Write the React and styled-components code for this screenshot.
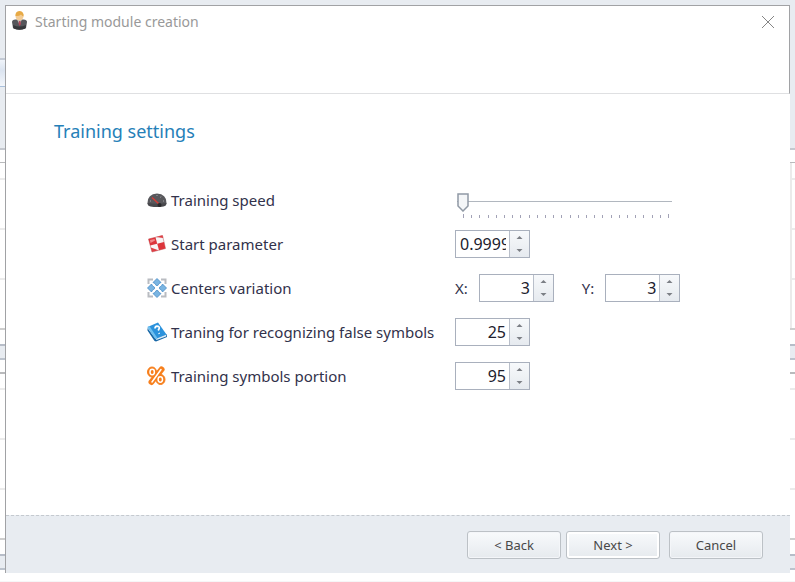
import React, { useState } from "react";
import styled, { createGlobalStyle } from "styled-components";

const Global = createGlobalStyle`
  * { box-sizing: border-box; }
  body { margin: 0; font-family: "Noto Sans", "Open Sans", sans-serif; color: #32324b; }
`;

const line = (y, color, size = 1) =>
  `linear-gradient(${color}, ${color}) 0 ${y}px / 100% ${size}px no-repeat`;

const Page = styled.main`
  min-height: 100vh;
  display: flex;
  flex-direction: column;
  padding: 5px 5px 9px;
  background:
    ${line(581, "#f6f6f7")},
    linear-gradient(#a9c0dc, #a9c0dc) 0 86px / 5px 1px no-repeat,
    linear-gradient(#f0f4fa, #dbe4f0 40%, #f3f6fb) 0 60px / 5px 26px no-repeat,
    linear-gradient(#c3cad5, #c3cad5) 0 58px / 5px 2px no-repeat,
    ${line(148, "#c4c8cf", 2)},
    ${line(0, "#e8ecf1", 148)},
    ${line(162, "#b9babc")},
    ${line(178, "#ebebeb", 2)},
    ${line(228, "#ebebeb", 2)},
    ${line(278, "#ebebeb", 2)},
    ${line(328, "#cecece", 2)},
    ${line(344, "#b7bdc8", 2)},
    ${line(358, "#bcc3cd", 2)},
    ${line(346, "#e8ecf1", 12)},
    ${line(372, "#b9babc", 2)},
    ${line(388, "#ebebeb", 2)},
    ${line(438, "#ebebeb", 2)},
    ${line(488, "#ebebeb", 2)},
    ${line(538, "#cecece", 2)},
    ${line(554, "#b7bdc8", 2)},
    ${line(568, "#bcc3cd", 2)},
    ${line(556, "#e8ecf1", 12)},
    linear-gradient(#ebebeb, #ebebeb) calc(100% - 3px) 163px / 2px 165px no-repeat,
    #fff;
`;

const Dialog = styled.section`
  flex: 1;
  display: flex;
  flex-direction: column;
  background: #fff;
  border-left: 1px solid #a1a2a5;
`;

const Header = styled.header`
  height: 89px;
  display: flex;
  align-items: flex-start;
  gap: 7px;
  padding: 5px 13px 0 5px;
  border: 1px solid #a1a2a5;
  border-left: 0;
  border-bottom-color: #dfe0e2;
`;

const Title = styled.h1`
  flex: 1;
  margin: 0;
  font: 400 14px/21px "Noto Sans", sans-serif;
  color: #999;
`;

const CloseButton = styled.button`
  display: flex;
  margin: 3px 0 0;
  padding: 1px;
  border: 0;
  background: none;
`;

const Body = styled.form`
  flex: 1;
  padding: 24px 48px;
`;

const Heading = styled.h2`
  margin: 0;
  font: 400 18px/26px "Noto Sans", sans-serif;
  color: #2680b8;
`;

const Settings = styled.div`
  display: grid;
  grid-template-columns: 300px 1fr;
  grid-auto-rows: 28px;
  row-gap: 16px;
  column-gap: 8px;
  align-items: center;
  padding: 42px 0 24px 93px;
`;

const Label = styled.label`
  display: flex;
  align-items: center;
  gap: 4px;
  font-size: 15px;
  line-height: 20px;
  white-space: nowrap;
`;

const Controls = styled.div`
  display: flex;
  align-items: center;
  gap: 28px;
`;

const Axis = styled.label`
  display: flex;
  align-items: center;
  gap: 11px;
  font-size: 15px;
`;

const SpinBox = styled.span`
  display: flex;
  width: 75px;
  height: 28px;
  border: 1px solid #a9b0bd;
  background: #fff;
`;

const SpinInput = styled.input`
  flex: 1;
  min-width: 0;
  margin: 0 3px 0 4px;
  padding: 0;
  border: 0;
  outline: 0;
  background: none;
  font: 16px "Noto Sans", sans-serif;
  color: #20202c;
  text-align: ${(p) => (p.$start ? "left" : "right")};
`;

const SpinButtons = styled.span`
  width: 20px;
  display: flex;
  flex-direction: column;
  border-left: 1px solid #b9bfca;
  background: linear-gradient(#f7f9fb, #e6eaef);
`;

const SpinButton = styled.button`
  flex: 1;
  display: flex;
  align-items: center;
  justify-content: center;
  padding: 0;
  border: 0;
  background: none;
`;

const SliderWrap = styled.div`
  width: 217px;
  padding-top: 12px;
`;

const Range = styled.input`
  appearance: none;
  display: block;
  width: 100%;
  height: 19px;
  margin: 0;
  background: linear-gradient(#b1b7bf, #b1b7bf) 2px 8px / 100% 1px no-repeat;
  &::-webkit-slider-thumb {
    appearance: none;
    width: 16px;
    height: 19px;
    background: url("data:image/svg+xml,%3Csvg xmlns='http://www.w3.org/2000/svg' width='16' height='19'%3E%3Cpath d='M3 1h10v12l-5 5-5-5z' fill='%23f4f6f8' stroke='%239099a5' stroke-width='1.500'/%3E%3C/svg%3E") no-repeat;
  }
`;

const Ticks = styled.svg`
  display: block;
  width: 100%;
  height: 8px;
`;

const Footer = styled.footer`
  display: flex;
  justify-content: flex-end;
  gap: 5px;
  padding: 15px 27px 14px;
  border-top: 1px dashed #c4c9cf;
  background: #e8ecf1;
`;

const Action = styled.button`
  width: 94px;
  height: 28px;
  padding: 0;
  border: 1px solid #bcc1c6;
  border-radius: 3px;
  background: linear-gradient(#f8fafc, #e6eaee);
  box-shadow: ${(p) => (p.$primary ? "inset 0 0 0 2px #fff" : "inset 0 0 0 1px #f4f6f9")};
  margin-left: ${(p) => (p.$apart ? "4px" : "0")};
  font: 13px "Noto Sans", sans-serif;
  color: #484848;
`;

const Icon = ({ children, size = 20, height = size }) => (
  <svg width={size} height={height} viewBox={`0 0 ${size} ${height}`} aria-hidden="true">{children}</svg>
);

const PersonIcon = () => (
  <Icon size={17} height={21}>
    <path d="M1 11q0-2.500 3.500-2.500h8q3.500 0 3.500 2.500l-1 6q-6.500 3.500-13 0z" fill="#55565b" />
    <path d="M2 14q6.500 3 13 0l-.5 3.500q-6 2.500-12 0z" fill="#36373b" />
    <path d="M6 8.500l2.500 5 2.500-5z" fill="#b9b9bd" />
    <path d="M8 10h1.500l.5 3-1.200 2-1.300-2z" fill="#b2485a" />
    <ellipse cx="8.500" cy="5" rx="4" ry="4.500" fill="#f3cc96" />
    <path d="M4.500 5q-.5-4.500 4-5 4.800.5 4 5.500-1.500-.5-2.500-2-2 2-5.500 1.500z" fill="#e7aa46" />
  </Icon>
);

const GaugeIcon = () => (
  <Icon>
    <path d="M.5 13Q.5 4 10 3.500q9.500.5 9.500 9.500 0 1-1 1.500-8.500 3-17 0-1-.5-1-1.500z" fill="#58585c" />
    <path d="M.5 13q9.500 1.500 19 0 0 3-3 3.500-6.500 1-13 0-3-.5-3-3.500z" fill="#48484c" />
    <path d="M3 11h1M10 5v1M14 6.500l-.5 1M17 11h-1" stroke="#a4a4a8" />
    <path d="M5 7.500l7 6.500" stroke="#d63c36" strokeWidth="1.500" />
    <circle cx="12.500" cy="15" r="2" fill="#29292c" />
  </Icon>
);

const TilesIcon = () => (
  <Icon>
    <path d="M1.500 5 15.500 1.500 18.500 14.500 5 18z" fill="#f8f5f5" stroke="#d8a9aa" />
    <path d="M1.500 5 8.500 3.200 10.200 9.800 3.200 11.500z" fill="#dc353b" />
    <path d="M10.200 9.800 17 8 18.500 14.500 12 16.200z" fill="#dc353b" />
    <path d="M9 2.900 15.500 1.300 16.200 4z M3.700 13.500 11.500 16.200 5 18z" fill="#dd3f45" />
    <path d="M3 6 7.500 5l.5 1.500-4.500 2.500z" fill="#f08a8c" />
  </Icon>
);

const SpreadIcon = () => (
  <Icon>
    <path d="M1.500 6V1.500H6M14 1.500h4.500V6M18.500 14v4.500H14M6 18.500H1.500V14" stroke="#b9bcc1" strokeWidth="2" fill="none" />
    <path id="arrow" d="M10 .5 14 4.500 12 5.500 10.800 7.500H9.200L8 5.500 6 4.500z" fill="#7ab5e2" stroke="#468cc6" strokeWidth=".8" />
    <use href="#arrow" transform="rotate(90 10 10)" />
    <use href="#arrow" transform="rotate(180 10 10)" />
    <use href="#arrow" transform="rotate(270 10 10)" />
  </Icon>
);

const BookIcon = () => (
  <Icon>
    <path d="M.5 6l8 11 11-5 .5 3-11 4.500q-1.500 0-2.500-2L.5 8.500z" fill="#1767a6" />
    <path d="M8.500 16.500l10.500-4v2L9.500 18z" fill="#dcebf6" />
    <path d="M.5 5 11 .5 19.500 12.500 8.500 17z" fill="#2b92dc" />
    <path d="M.5 5l2-.8 8 12-2 .8z" fill="#6fc0f0" />
    <path d="M8 6.500q0-2 2-2.300 2.700 0 2.200 2.300l-1 2m.7 2.500.4.800" stroke="#fff" strokeWidth="1.700" fill="none" />
  </Icon>
);

const PercentIcon = () => (
  <Icon>
    <g fill="#f77f1c" stroke="#f77f1c">
      <ellipse cx="5" cy="6" rx="4.500" ry="5" /><ellipse cx="13.500" cy="13.500" rx="4.500" ry="5" />
      <path d="M14.500 3.500 4.500 16" strokeWidth="6" strokeLinecap="round" />
    </g>
    <g fill="#f77f1c" stroke="#fff" strokeWidth="1.500" strokeLinecap="round">
      <path d="M14 3.500 5 16" />
      <ellipse cx="5.200" cy="6" rx="2.200" ry="2.700" /><ellipse cx="13.300" cy="13.500" rx="2.200" ry="2.700" />
    </g>
  </Icon>
);

function Spinner({ id, initial, step = 1, start, label }) {
  const [value, setValue] = useState(initial);
  const bump = (d) => setValue((v) => String(Number((Number(v) + d).toFixed(5))));
  return (
    <SpinBox>
      <SpinInput id={id} $start={start} value={value} onChange={(e) => setValue(e.target.value)} />
      <SpinButtons>
        <SpinButton type="button" aria-label={`Increase ${label}`} onClick={() => bump(step)}>
          <Icon size={7} height={3}><path d="M.5 3 3.500 0 6.500 3z" fill="#7b7f85" /></Icon>
        </SpinButton>
        <SpinButton type="button" aria-label={`Decrease ${label}`} onClick={() => bump(-step)}>
          <Icon size={7} height={3}><path d="M.5 0 3.500 3 6.500 0z" fill="#7b7f85" /></Icon>
        </SpinButton>
      </SpinButtons>
    </SpinBox>
  );
}

export default function App() {
  return (
    <Page>
      <Global />
      <Dialog>
        <Header>
          <PersonIcon />
          <Title>Starting module creation</Title>
          <CloseButton type="button" aria-label="Close">
            <Icon size={14}><path d="M1 1l12 12M13 1 1 13" stroke="#858585" /></Icon>
          </CloseButton>
        </Header>
        <Body id="training" onSubmit={(e) => e.preventDefault()}>
          <Heading>Training settings</Heading>
          <Settings>
            <Label htmlFor="speed"><GaugeIcon />Training speed</Label>
            <SliderWrap>
              <Range id="speed" type="range" min="0" max="25" defaultValue="0" />
              <Ticks aria-hidden="true">
                {Array.from({ length: 26 }, (_, i) => (
                  <rect key={i} x={8 + Math.round(i * 8.2)} y={i % 25 ? 3 : 2} width="1" height={i % 25 ? 3 : 4} fill="#a2a2b6" />
                ))}
              </Ticks>
            </SliderWrap>
            <Label htmlFor="start"><TilesIcon />Start parameter</Label>
            <Controls><Spinner id="start" initial="0.9999" step={0.0001} start label="start parameter" /></Controls>
            <Label as="span"><SpreadIcon />Centers variation</Label>
            <Controls>
              <Axis htmlFor="x">X:<Spinner id="x" initial="3" label="X" /></Axis>
              <Axis htmlFor="y">Y:<Spinner id="y" initial="3" label="Y" /></Axis>
            </Controls>
            <Label htmlFor="false-symbols"><BookIcon />Traning for recognizing false symbols</Label>
            <Controls><Spinner id="false-symbols" initial="25" label="false symbols" /></Controls>
            <Label htmlFor="portion"><PercentIcon />Training symbols portion</Label>
            <Controls><Spinner id="portion" initial="95" label="symbols portion" /></Controls>
          </Settings>
        </Body>
        <Footer>
          <Action type="button">&lt; Back</Action>
          <Action type="submit" form="training" $primary>Next &gt;</Action>
          <Action type="button" $apart>Cancel</Action>
        </Footer>
      </Dialog>
    </Page>
  );
}
